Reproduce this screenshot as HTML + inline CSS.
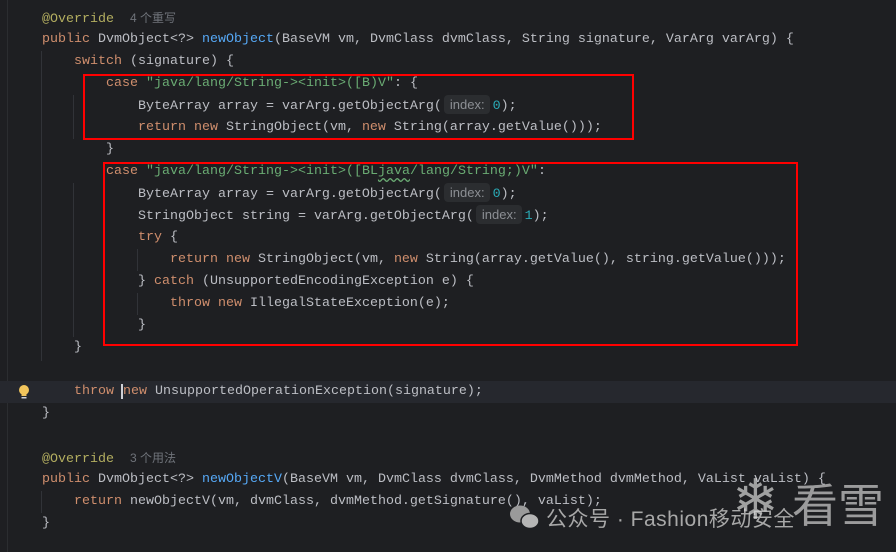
<!DOCTYPE html>
<html><head><meta charset="utf-8"><style>
html,body{margin:0;padding:0;}
body{width:896px;height:552px;background:#1e1f22;position:relative;overflow:hidden;font-family:"Liberation Mono",monospace;font-size:13.33px;color:#bcbec4;}
.l{position:absolute;left:42px;height:22px;line-height:22px;white-space:pre;}
.k{color:#cf8e6d}.s{color:#6aab73}.a{color:#b3ae60}.f{color:#56a8f5}.n{color:#2aacb8}
.h{color:#6f737a;font-family:"Liberation Sans","Noto Sans CJK SC",sans-serif;font-size:12px}
.hint{display:inline-block;background:#2b2d30;color:#8c8f94;font-family:"Liberation Sans",sans-serif;font-size:13px;line-height:19px;padding:0 5px 0 6px;border-radius:4px;margin:0 3px 0 2px;}
.g{position:absolute;width:1px;background:#313338;}
.box{position:absolute;border:2px solid #f00;}
.w{text-decoration:underline wavy #6aab73;text-underline-offset:3px}
</style></head><body>
<div class="g" style="left:7px;top:0;height:552px;background:#2b2d30"></div>
<div style="position:absolute;left:0;top:381px;width:896px;height:22px;background:#26282e"></div>
<div class="g" style="left:41px;top:51px;height:310px"></div>
<div class="g" style="left:73px;top:95px;height:44px"></div>
<div class="g" style="left:73px;top:183px;height:154px"></div>
<div class="g" style="left:137px;top:249px;height:22px"></div>
<div class="g" style="left:137px;top:293px;height:22px"></div>
<div class="g" style="left:41px;top:491px;height:22px"></div>

<div class="l" style="top:7px"><span class="a">@Override</span>  <span class="h">4 个重写</span></div>
<div class="l" style="top:29px"><span class="k">public</span> DvmObject&lt;?&gt; <span class="f">newObject</span>(BaseVM vm, DvmClass dvmClass, String signature, VarArg varArg) {</div>
<div class="l" style="top:51px">    <span class="k">switch</span> (signature) {</div>
<div class="l" style="top:73px">        <span class="k">case</span> <span class="s">"java/lang/String-&gt;&lt;init&gt;([B)V"</span>: {</div>
<div class="l" style="top:95px">            ByteArray array = varArg.getObjectArg(<span class="hint">index:</span><span class="n">0</span>);</div>
<div class="l" style="top:117px">            <span class="k">return new</span> StringObject(vm, <span class="k">new</span> String(array.getValue()));</div>
<div class="l" style="top:139px">        }</div>
<div class="l" style="top:161px">        <span class="k">case</span> <span class="s">"java/lang/String-&gt;&lt;init&gt;([BL<span class="w">java</span>/lang/String;)V"</span>:</div>
<div class="l" style="top:183px">            ByteArray array = varArg.getObjectArg(<span class="hint">index:</span><span class="n">0</span>);</div>
<div class="l" style="top:205px">            StringObject string = varArg.getObjectArg(<span class="hint">index:</span><span class="n">1</span>);</div>
<div class="l" style="top:227px">            <span class="k">try</span> {</div>
<div class="l" style="top:249px">                <span class="k">return new</span> StringObject(vm, <span class="k">new</span> String(array.getValue(), string.getValue()));</div>
<div class="l" style="top:271px">            } <span class="k">catch</span> (UnsupportedEncodingException e) {</div>
<div class="l" style="top:293px">                <span class="k">throw new</span> IllegalStateException(e);</div>
<div class="l" style="top:315px">            }</div>
<div class="l" style="top:337px">    }</div>
<div class="l" style="top:381px">    <span class="k">throw</span> <span style="border-left:2px solid #ced0d6;margin-left:-1px"></span><span class="k">new</span> UnsupportedOperationException(signature);</div>
<div class="l" style="top:403px">}</div>
<div class="l" style="top:447px"><span class="a">@Override</span>  <span class="h">3 个用法</span></div>
<div class="l" style="top:469px"><span class="k">public</span> DvmObject&lt;?&gt; <span class="f">newObjectV</span>(BaseVM vm, DvmClass dvmClass, DvmMethod dvmMethod, VaList vaList) {</div>
<div class="l" style="top:491px">    <span class="k">return</span> newObjectV(vm, dvmClass, dvmMethod.getSignature(), vaList);</div>
<div class="l" style="top:513px">}</div>

<div class="box" style="left:83px;top:74px;width:547px;height:62px"></div>
<div class="box" style="left:103px;top:162px;width:691px;height:180px"></div>

<svg style="position:absolute;left:17px;top:384px" width="14" height="16" viewBox="0 0 14 16"><circle cx="7" cy="6" r="5" fill="#f2c55c"/><rect x="4.5" y="9" width="5" height="3" fill="#f2c55c"/><rect x="4.5" y="13" width="5" height="1.5" fill="#ced0d6"/></svg>

<svg style="position:absolute;left:508px;top:503px" width="34" height="28" viewBox="0 0 34 28"><ellipse cx="12" cy="11" rx="10" ry="8.5" fill="#9a9a9a"/><ellipse cx="22" cy="18" rx="9" ry="7.5" fill="#b5b5b5" stroke="#1e1f22" stroke-width="1.5"/></svg>
<div style="position:absolute;left:546px;top:503px;font-family:'Liberation Sans','Noto Sans CJK SC',sans-serif;font-size:21px;color:#a8a8a8;white-space:pre;letter-spacing:0.5px">公众号 · Fashion移动安全</div>
<div style="position:absolute;left:732px;top:468px;font-family:'DejaVu Sans',sans-serif;font-size:56px;color:#d8d8d8;opacity:0.7">❄</div>
<div style="position:absolute;left:792px;top:474px;font-family:'Noto Sans CJK SC',sans-serif;font-size:46px;color:#d0d0d0;opacity:0.7;line-height:58px">看雪</div>
</body></html>
